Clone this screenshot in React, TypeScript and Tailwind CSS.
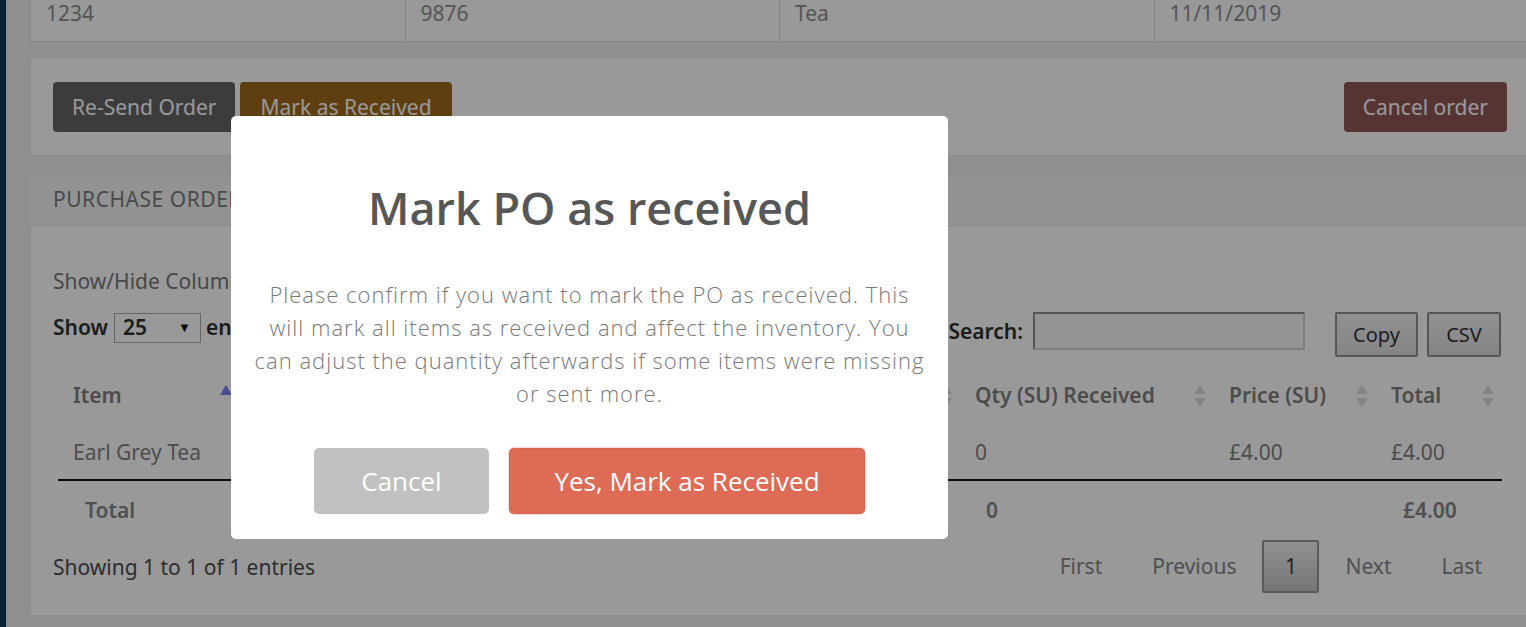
import React from "react";

function SortBoth() {
  return (
    <svg width="12" height="22" viewBox="0 0 12 22" className="shrink-0">
      <path d="M6 0 L12 9 L0 9 Z" fill="#dcdcdc" />
      <path d="M6 22 L12 13 L0 13 Z" fill="#dcdcdc" />
    </svg>
  );
}

function SortAsc() {
  return (
    <svg width="12" height="22" viewBox="0 0 12 22" className="shrink-0">
      <path d="M6 0 L12 10 L0 10 Z" fill="#7d7df2" />
    </svg>
  );
}

// middle columns sit under the dialog, so they carry no visible label
const columns = [
  { key: "item", label: "Item", asc: true },
  { key: "c2", label: "" },
  { key: "c3", label: "" },
  { key: "c4", label: "" },
  { key: "received", label: "Qty (SU) Received" },
  { key: "price", label: "Price (SU)" },
  { key: "total", label: "Total" },
];

export default function App() {
  return (
    <div className="relative flex h-[627px] w-[1526px] overflow-hidden bg-[#eeeeee] font-['Noto_Sans',sans-serif]">
      {/* sidebar edge */}
      <div className="w-[6px] shrink-0 bg-[#12395a]" />

      <div className="ml-[24px] flex w-[1500px] shrink-0 flex-col">
        {/* order summary row (scrolled) */}
        <div className="grid h-[42px] grid-cols-4 border-x border-b border-[#e3e3e3] bg-white text-[21px] leading-[26px] text-[#8e8e8e]">
          <div className="border-r border-[#dadada] pl-[15px]">1234</div>
          <div className="border-r border-[#dadada] pl-[15px]">9876</div>
          <div className="border-r border-[#dadada] pl-[15px]">Tea</div>
          <div className="pl-[15px]">11/11/2019</div>
        </div>

        {/* actions */}
        <div className="mt-[15px] flex h-[99px] items-center justify-between border border-[#e9e9e9] bg-white px-[22px]">
          <div className="flex gap-[5px]">
            <button className="h-[50px] rounded-[4px] bg-[#656565] px-[19px] pt-[3px] text-[21px] text-white">
              Re-Send Order
            </button>
            <button className="h-[50px] rounded-[4px] bg-[#9e6a1c] px-[20px] pt-[3px] text-[21px] text-white">
              Mark as Received
            </button>
          </div>
          <button className="h-[50px] rounded-[4px] bg-[#915757] px-[19px] pt-[3px] text-[21px] text-white">
            Cancel order
          </button>
        </div>

        {/* purchase order items */}
        <div className="mt-[17px] flex h-[443px] flex-col border border-[#e9e9e9] bg-white">
          <div className="flex h-[52px] items-center border-b border-[#e6e6e6] bg-[#f6f6f6] px-[22px] text-[21px] uppercase tracking-wide text-[#7c7c7c]">
            Purchase Order Items
          </div>
          <div className="pl-[22px] pr-[28px] pt-[41px]">
            <div className="text-[21px] leading-[28px] text-[#777777]">Show/Hide Columns</div>

            <div className="mt-[17px] flex items-start justify-between">
              <div className="mt-[1px] flex h-[30px] items-center text-[21px] font-semibold text-[#303030]">
                <span>Show</span>
                <div className="ml-[6px] flex h-[30px] w-[87px] items-center justify-between border border-[#aaaaaa] bg-white pl-[8px] pr-[9px]">
                  <span>25</span>
                  <span className="text-[13px] text-[#111]">▼</span>
                </div>
                <span className="ml-[5px]">entries</span>
              </div>
              <div className="flex items-start">
                <span className="text-[21px] font-semibold leading-[38px] text-[#303030]">Search:</span>
                <div className="ml-[10px] h-[38px] w-[272px] border-2 border-b-[#d2d2d2] border-l-[#909090] border-r-[#d2d2d2] border-t-[#909090] bg-[#f7f7f7]" />
                <button className="ml-[30px] h-[45px] w-[83px] rounded-[2px] border-2 border-[#8f8f8f] bg-gradient-to-b from-[#f2f2f2] to-[#dedede] text-[20px] text-[#333]">
                  Copy
                </button>
                <button className="ml-[9px] h-[45px] w-[74px] rounded-[2px] border-2 border-[#8f8f8f] bg-gradient-to-b from-[#f2f2f2] to-[#dedede] text-[20px] text-[#333]">
                  CSV
                </button>
              </div>
            </div>

            <table className="ml-[5px] mt-[12px] w-[1444px] table-fixed border-collapse text-[21px]">
              <colgroup>
                <col className="w-[182px]" />
                <col className="w-[240px]" />
                <col className="w-[240px]" />
                <col className="w-[240px]" />
                <col className="w-[254px]" />
                <col className="w-[162px]" />
                <col className="w-[126px]" />
              </colgroup>
              <thead>
                <tr className="h-[54px]">
                  {columns.map((c) => (
                    <th key={c.key} className="pl-[15px] pr-[8px] text-left font-semibold text-[#7f7f7f]">
                      <div className="flex items-center justify-between">
                        <span className="whitespace-nowrap">{c.label}</span>
                        {c.asc ? <SortAsc /> : <SortBoth />}
                      </div>
                    </th>
                  ))}
                </tr>
              </thead>
              <tbody>
                <tr className="h-[57px] border-b-2 border-[#111111] text-[#7f7f7f]">
                  <td className="px-[15px] pt-[4px]">Earl Grey Tea</td>
                  <td className="px-[15px] pt-[4px]" />
                  <td className="px-[15px] pt-[4px]" />
                  <td className="px-[15px] pt-[4px]" />
                  <td className="px-[15px] pt-[4px]">0</td>
                  <td className="px-[15px] pt-[4px]">£4.00</td>
                  <td className="px-[15px] pt-[4px]">£4.00</td>
                </tr>
              </tbody>
              <tfoot>
                <tr className="h-[56px] font-semibold text-[#858585]">
                  <td className="px-[27px] pt-[4px]">Total</td>
                  <td className="px-[27px]" />
                  <td className="px-[27px]" />
                  <td className="px-[27px]" />
                  <td className="px-[26px] pt-[4px]">0</td>
                  <td className="px-[27px]" />
                  <td className="px-[27px] pt-[4px]">£4.00</td>
                </tr>
              </tfoot>
            </table>

            <div className="mt-[3px] flex items-center justify-between">
              <span className="text-[21px] leading-[28px] text-[#4b4b4b]">Showing 1 to 1 of 1 entries</span>
              <div className="-mr-[5px] flex items-center text-[21px] text-[#858585]">
                <span className="px-[24px] py-[12px]">First</span>
                <span className="ml-[2px] px-[24px] py-[12px]">Previous</span>
                <span className="ml-[2px] flex h-[53px] w-[57px] items-center justify-center rounded-[2px] border-2 border-[#979797] bg-gradient-to-b from-[#f2f2f2] to-[#c4c4c4] text-[#383838]">
                  1
                </span>
                <span className="ml-[2px] px-[24px] py-[12px]">Next</span>
                <span className="ml-[2px] px-[24px] py-[12px]">Last</span>
              </div>
            </div>
          </div>
        </div>
      </div>

      {/* dim overlay */}
      <div className="absolute inset-0 bg-black/40" />

      {/* confirm dialog */}
      <div className="absolute left-[231px] top-[116px] flex h-[423px] w-[717px] flex-col items-center rounded-[5px] bg-white pt-[64px] font-['Open_Sans',sans-serif]">
        <h2 className="text-[45px] font-semibold leading-[56px] text-[#575757]">Mark PO as received</h2>
        <p className="mt-[42px] w-[672px] text-center text-[22px] font-light leading-[33px] tracking-[1px] text-[#797979]">
          Please confirm if you want to mark the PO as received. This will mark all items as received and affect the
          inventory. You can adjust the quantity afterwards if some items were missing or sent more.
        </p>
        <div className="mb-[25px] mt-auto flex gap-[20px]">
          <button className="h-[66px] w-[175px] rounded-[5px] bg-[#c1c1c1] text-[26px] text-white">Cancel</button>
          <button className="h-[66px] w-[356px] rounded-[5px] bg-[#dd6b55] text-[26px] text-white shadow-[0_0_2px_rgba(221,107,85,0.8),inset_0_0_0_1px_rgba(0,0,0,0.05)]">
            Yes, Mark as Received
          </button>
        </div>
      </div>
    </div>
  );
}
